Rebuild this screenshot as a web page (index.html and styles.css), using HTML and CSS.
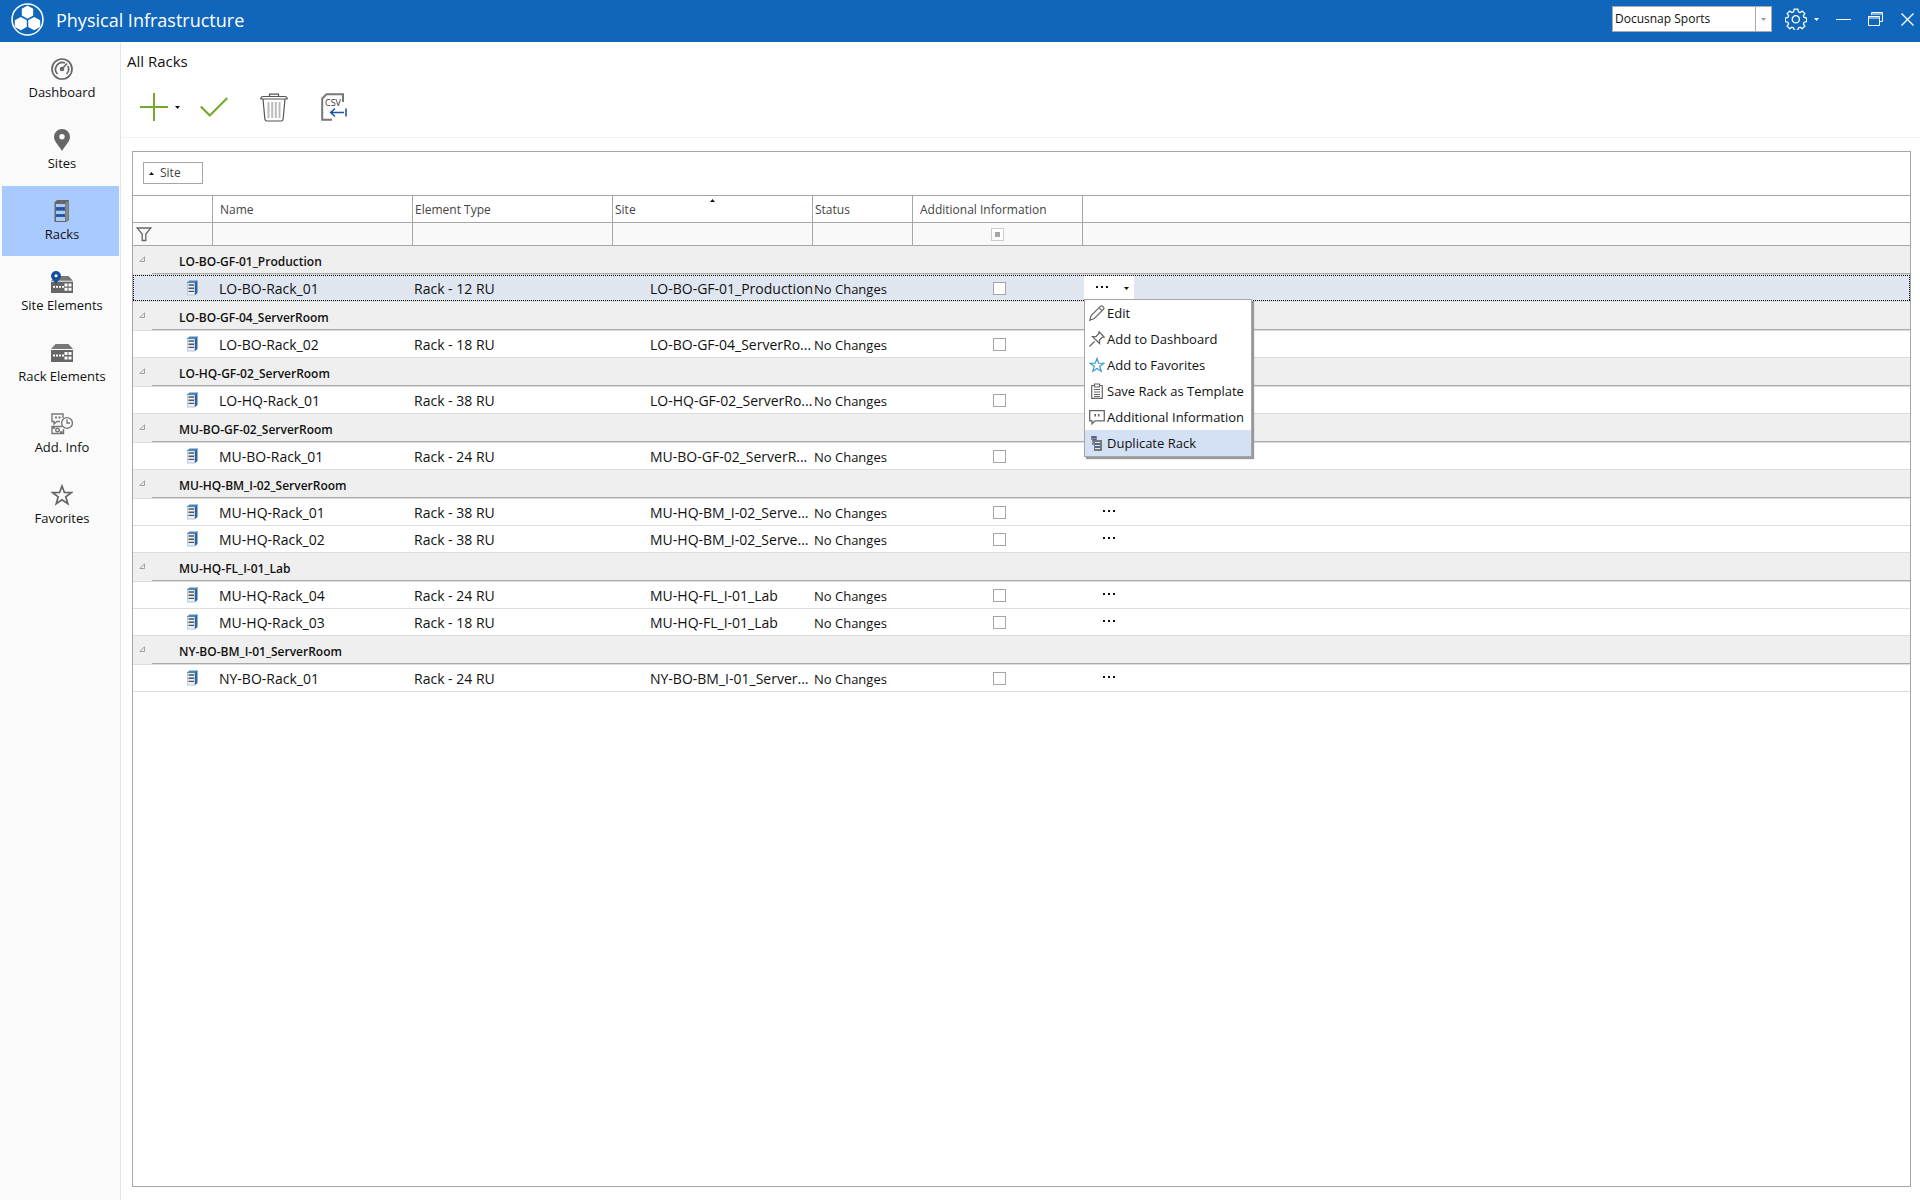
FILE: index.html
```html
<!DOCTYPE html>
<html lang="en">
<head>
<meta charset="utf-8">
<title>Physical Infrastructure</title>
<link rel="stylesheet" href="styles.css">
</head>
<body>
<svg class="defs" aria-hidden="true">
  <symbol id="rack" viewBox="0 0 11 16">
    <path d="M0 2.500 2.500 .5H11L8 3H0z" fill="#4d85bd"/>
    <path d="M7.500 3L10.500.5v12.500l-3 2.500z" fill="#2c659c"/>
    <path d="M0 3h7.500v12.500H0z" fill="#e8eff6"/>
    <path d="M1.500 5h5.500M1.500 8.200h5.500M1.500 11.400h5.500" stroke="#50555c" stroke-width="1.400"/>
    <path d="M.5 3v12h7" fill="none" stroke="#b4cadf"/>
  </symbol>
  <symbol id="dots" viewBox="0 0 12 2">
    <path d="M0 0h2v2H0zM5 0h2v2H5zM10 0h2v2h-2z" fill="#111"/>
  </symbol>
  <symbol id="down" viewBox="0 0 5 3">
    <path d="M0 0h5L2.500 3z" fill="currentColor"/>
  </symbol>
  <symbol id="up" viewBox="0 0 5 3">
    <path d="M0 3h5L2.500 0z" fill="currentColor"/>
  </symbol>
  <symbol id="fold" viewBox="0 0 6 6">
    <path d="M5.500.8v4.700H.8z" fill="none" stroke="#999" stroke-width=".9"/>
  </symbol>
  <symbol id="star" viewBox="0 0 22 22">
    <path d="M11 2l2.400 6.500 7 .1-5.600 4.200 2 6.900L11 15.700l-5.800 4 2-6.900L1.600 8.600l7-.1z" fill="none" stroke="currentColor" stroke-width="1.700"/>
  </symbol>
  <symbol id="switch" viewBox="0 0 22 18">
    <path d="M4.500 0h13L22 5H0z" fill="#777"/>
    <path d="M0 6h22v12H0z" fill="#666"/>
    <path d="M2 11.500h11" stroke="#fff" stroke-width="2" stroke-dasharray="2 1"/>
    <path d="M13.500 8h3v3h-3zM17.500 8h3v3h-3zM13.500 12.500h3v3h-3zM17.500 12.500h3v3h-3z" fill="#fff"/>
  </symbol>
</svg>

<header class="titlebar">
  <svg class="logo" viewBox="0 0 32 32" aria-hidden="true">
    <circle cx="16" cy="16" r="15" fill="none" stroke="#fff" stroke-width="1.500"/>
    <g fill="#fff">
      <path d="M16 2.500l5.500 3v6.500L16 15.200 10.500 12V5.500z"/>
      <path d="M9.500 13.500l5.800 3.200v6.600L9.500 26.500 3.700 23.300v-6.600z"/>
      <path d="M22.500 13.500l5.800 3.200v6.600l-5.800 3.200-5.800-3.200v-6.600z"/>
    </g>
  </svg>
  <h1>Physical Infrastructure</h1>
  <div class="company">
    <input type="text" value="Docusnap Sports" aria-label="Company">
    <button type="button" aria-label="Choose company"><svg width="5" height="3"><use href="#down"/></svg></button>
  </div>
  <button type="button" class="settings" aria-label="Settings">
    <svg width="22" height="22" viewBox="-11 -11 22 22" fill="none" stroke="#fff" stroke-width="1.300">
      <path d="M-1.800-9.800h3.600l.6 2.600 1.700.7 2.200-1.400 2.500 2.500-1.400 2.200.7 1.700 2.600.5v3.600l-2.600.6-.7 1.700 1.400 2.200-2.500 2.500-2.200-1.400-1.700.7-.6 2.600h-3.600l-.6-2.600-1.700-.7-2.200 1.400-2.500-2.500 1.400-2.200-.7-1.700-2.600-.6v-3.600l2.600-.5.7-1.700-1.400-2.200 2.500-2.500 2.200 1.400 1.700-.7z"/>
      <circle cx="-.2" cy=".3" r="3.600"/>
    </svg>
    <svg width="5" height="3"><use href="#down"/></svg>
  </button>
  <button type="button" class="win" aria-label="Minimize"><svg width="15" height="15"><path d="M0 7.500h15" stroke="#fff"/></svg></button>
  <button type="button" class="win" aria-label="Restore"><svg width="15" height="15" fill="none" stroke="#fff"><path d="M3.500 3V.5h11v9H12M3.500 2h11M.5 4.500h11v9H.5zM.5 6h11"/></svg></button>
  <button type="button" class="win" aria-label="Close"><svg width="15" height="15"><path d="M1.500 1.500l12 12M13.500 1.500l-12 12" stroke="#fff" stroke-width="1.400"/></svg></button>
</header>

<div class="shell">
  <nav class="sidebar">
    <a href="#dashboard">
      <svg width="22" height="22" viewBox="0 0 22 22" fill="none" stroke="#666" stroke-width="1.700">
        <circle cx="11" cy="11" r="10"/>
        <path d="M6.500 16A6.800 6.800 0 0 1 14 5M16.800 8a6.800 6.800 0 0 1-1.300 8"/>
        <path d="M11 11l5-5.500"/><circle cx="11" cy="11" r="1.500" fill="#666"/>
      </svg>Dashboard</a>
    <a href="#sites">
      <svg width="22" height="22" viewBox="0 0 22 22"><path fill="#666" fill-rule="evenodd" d="M11 0a8 8 0 0 1 8 8c0 5-5.500 9-8 14-2.500-5-8-9-8-14a8 8 0 0 1 8-8zm0 5a2.700 2.700 0 1 0 0 5.400A2.700 2.700 0 0 0 11 5z"/></svg>Sites</a>
    <a href="#racks" class="active" aria-current="page">
      <svg width="22" height="22" viewBox="0 0 22 22">
        <path d="M3.500 2.500 6 0h12v20l-3 2H3.500z" fill="#666"/>
        <path d="M14.500 3l3-2.500v19l-3 2z" fill="#8b8b8b"/>
        <path d="M5 4h9v3H5zM5 10.500h9v3.500H5zM5 17h9v4H5z" fill="#a9cafb"/>
        <path d="M5 7h9v3.500H5zM5 14h9v3H5z" fill="#2a5caa"/>
        <path d="M6 8.800h8M6 15.500h8" stroke="#123f80" stroke-dasharray="1 2"/>
      </svg>Racks</a>
    <a href="#site-elements">
      <svg width="22" height="22" viewBox="0 0 22 22">
        <svg y="5" width="22" height="17" viewBox="0 0 22 18" preserveAspectRatio="none"><use href="#switch"/></svg>
        <path d="M5 0a5 5 0 0 1 5 5c0 3-3.500 5-5 8.500C3.500 10 0 8 0 5a5 5 0 0 1 5-5z" fill="#154f9e"/>
        <circle cx="5" cy="4.800" r="1.500" fill="#fff"/>
      </svg>Site Elements</a>
    <a href="#rack-elements">
      <svg width="22" height="22" viewBox="0 0 22 22"><svg y="2" width="22" height="18"><use href="#switch"/></svg></svg>Rack Elements</a>
    <a href="#add-info">
      <svg width="22" height="22" viewBox="0 0 22 22" fill="none" stroke="#777" stroke-width="1.400">
        <path d="M12 5V1H1v7.500h2V11l3-2.500h3"/>
        <path d="M4 4.500h2M7.500 4.500h2" stroke-width="2"/>
        <circle cx="16" cy="10" r="5.400"/><path d="M16 6.500V10h3"/>
        <path d="M11 13.500H1v7h11.500V16M1 15h3M9 19h3"/><circle cx="6.500" cy="17" r="1.800"/>
      </svg>Add. Info</a>
    <a href="#favorites"><svg class="grey" width="22" height="22"><use href="#star"/></svg>Favorites</a>
  </nav>

  <main class="content">
    <h2>All Racks</h2>
    <div class="toolbar">
      <button type="button" aria-label="Add"><svg width="28" height="28"><path d="M0 14h28M14 0v28" stroke="#76a92b" stroke-width="2"/></svg></button>
      <button type="button" class="more" aria-label="More add options"><svg width="5" height="3"><use href="#down"/></svg></button>
      <button type="button" class="check" aria-label="Apply"><svg width="28" height="28"><path d="M.8 13.500l9 9L27.300 5" fill="none" stroke="#76a92b" stroke-width="2.200"/></svg></button>
      <button type="button" class="trash" aria-label="Delete">
        <svg width="28" height="29" fill="none" stroke="#555" stroke-width="1.200">
          <path d="M9.500 3.500V1.200h9v2.300M.8 6q0-2.500 2.500-2.500h21.400q2.500 0 2.500 2.500zM3 6l1.800 19.500q.2 2.500 2 2.500h14.400q1.800 0 2-2.500L25 6"/>
          <path d="M8.500 9v16M12.200 9v16M15.800 9v16M19.500 9v16" stroke="#bbb" stroke-width="2"/>
        </svg></button>
      <button type="button" class="csv" aria-label="Export as CSV">
        <svg width="27" height="29">
          <path d="M22 9V1.300H5.500L1.200 5.500v21.300H11" fill="none" stroke="#777" stroke-width="2"/>
          <text x="4" y="13">CSV</text>
          <path d="M10 19.500h13M14 15.500l-4.300 4 4.300 4M25 15.500v8" fill="none" stroke="#1d55a5" stroke-width="1.600"/>
        </svg></button>
    </div>

    <section class="grid">
      <div class="grouping">
        <button type="button"><svg width="5" height="3"><use href="#up"/></svg>Site</button>
      </div>
      <table>
        <colgroup><col class="c-icon"><col class="c-text"><col class="c-text"><col class="c-text"><col class="c-status"><col class="c-info"><col></colgroup>
        <thead>
          <tr class="heads">
            <th></th><th class="wide">Name</th><th>Element Type</th>
            <th class="sorted"><svg width="5" height="3"><use href="#up"/></svg>Site</th>
            <th>Status</th><th class="wide">Additional Information</th><th></th>
          </tr>
          <tr class="filters">
            <td><svg width="16" height="15"><path d="M1.200 1h13.600L9.800 7v6.500H6.200V7z" fill="none" stroke="#666" stroke-width="1.300"/></svg></td>
            <td></td><td></td><td></td><td></td>
            <td class="tick"><input type="checkbox" class="mixed" aria-label="Filter additional information"></td><td></td>
          </tr>
        </thead>
        <tbody id="rows"></tbody>
      </table>
    </section>
  </main>
</div>
<script src="grid.js"></script>
</body>
</html>
```
FILE: styles.css
```css
* { box-sizing: border-box; }
body {
  margin: 0;
  min-height: 100vh;
  display: flex;
  flex-direction: column;
  background: #fff;
  color: #111;
  font: 13px/18px "Open Sans", "Noto Sans", sans-serif;
}
button {
  display: flex;
  align-items: center;
  justify-content: center;
  margin: 0;
  padding: 0;
  border: 0;
  background: none;
  color: inherit;
  font: inherit;
}
h1, h2 { margin: 0; font-weight: 400; }
svg { display: block; flex: none; }
.defs { position: absolute; width: 0; height: 0; }

.titlebar {
  display: flex;
  align-items: center;
  height: 42px;
  padding: 0 0 4px 11px;
  background: #0f66bb;
  color: #fff;
}
.logo { width: 33px; height: 33px; }
h1 { flex: 1; margin-left: 12px; padding-top: 2px; font-size: 18px; line-height: 24px; }
.company {
  display: flex;
  width: 160px;
  height: 26px;
  border: 1px solid #ababab;
  background: #fff;
}
.company input {
  flex: 1;
  min-width: 0;
  border: 0;
  padding: 0 2px;
  font: 12px/18px "Open Sans", sans-serif;
  color: #111;
}
.company button { width: 16px; border-left: 1px solid #ababab; color: #999; }
.settings { gap: 7px; margin: 0 8px 0 13px; }
.win { width: 32px; height: 26px; }
.win:last-child { width: 29px; justify-content: flex-end; padding-right: 5px; }

.shell { flex: 1; display: flex; }
.sidebar {
  width: 121px;
  padding: 2px 1px 0 2px;
  display: flex;
  flex-direction: column;
  gap: 1px;
  background: #fafafa;
  border-right: 1px solid #e4e4e4;
}
.sidebar a {
  display: flex;
  flex-direction: column;
  align-items: center;
  gap: 3px;
  height: 70px;
  padding: 14px 0 0 3px;
  color: #111;
  text-decoration: none;
}
.sidebar .active { background: #a9cafe; }
.grey { color: #666; }

.content { flex: 1; min-width: 0; display: flex; flex-direction: column; }
h2 { padding: 8px 6px 0; font-size: 15px; line-height: 22px; }
.toolbar {
  display: flex;
  align-items: flex-start;
  height: 66px;
  padding: 21px 0 0 19px;
  border-bottom: 1px solid #f2f2f2;
}
.more { height: 28px; margin-left: 7px; }
.check { margin-left: 20px; }
.trash { margin-left: 32px; }
.csv { margin-left: 33px; }
.csv text { font-size: 9px; fill: #333; }

.grid {
  flex: 1;
  margin: 13px 9px 13px 11px;
  border: 1px solid #a6a6a6;
}
.grouping { height: 44px; padding: 10px; border-bottom: 1px solid #a6a6a6; }
.grouping button {
  justify-content: flex-start;
  gap: 6px;
  width: 60px;
  height: 22px;
  padding-left: 5px;
  border: 1px solid #a6a6a6;
  font-size: 12px;
  color: #444;
}
.grouping svg { color: #111; }

table { width: 100%; table-layout: fixed; border-collapse: separate; border-spacing: 0; }
.c-icon { width: 80px; }
.c-text { width: 200px; }
.c-status { width: 100px; }
.c-info { width: 170px; }
th, td { padding: 0; white-space: nowrap; text-align: left; }
.heads th, .filters td { border-right: 1px solid #a6a6a6; border-bottom: 1px solid #a6a6a6; }
.heads th:last-child, .filters td:last-child { border-right: 0; }
.heads th { position: relative; height: 27px; padding: 2px 0 0 2px; font-size: 12px; font-weight: 400; color: #444; }
.heads .wide { padding-left: 7px; }
.sorted svg { position: absolute; top: 3px; left: 97px; color: #111; }
.filters td { height: 23px; padding-left: 3px; background: #f9f9f9; }
.tick input {
  appearance: none;
  display: block;
  width: 13px;
  height: 13px;
  margin: 0 auto;
  border: 1px solid #a6a6a6;
  background: #fff;
}
.filters .tick { padding-left: 0; }
.filters .mixed { border-color: #ccc; background: #a6a6a6; box-shadow: inset 0 0 0 3px #fff; }

.group td { height: 29px; border-bottom: 1px solid #ddd; background: #efefef; }
.fold { display: flex; height: 28px; }
.fold button { justify-content: flex-start; width: 19px; height: 26px; padding-left: 6px; }
.fold span {
  flex: 1;
  padding: 7px 0 0 27px;
  border-bottom: 1px solid #aaa;
  font-size: 12px;
  font-weight: 600;
}
.row td { height: 27px; padding-top: 2px; border-bottom: 1px solid #ddd; font-size: 14px; }
.row .icon { padding: 0 0 0 54px; }
.row .name { padding-left: 6px; }
.row .type { padding-left: 1px; }
.row .site { padding-left: 37px; }
.row .status { padding-left: 1px; font-size: 13px; }
.row .tick { padding: 0 0 0 3px; }
.row .open { padding: 0 0 0 20px; }
.row .open button { height: 20px; align-items: flex-start; padding-top: 8px; }
.selected {
  --dots: repeating-linear-gradient(90deg, #000 0 1px, transparent 1px 2px);
  --side: repeating-linear-gradient(#000 0 1px, transparent 1px 2px);
}
.selected td { background: var(--dots) top / 100% 1px no-repeat, var(--dots) bottom / 100% 1px no-repeat, #dfe6f0; background-clip: padding-box; }
.selected td:first-child { background: var(--dots) top / 100% 1px no-repeat, var(--dots) bottom / 100% 1px no-repeat, var(--side) left / 1px 100% no-repeat, #dfe6f0; background-clip: padding-box; }
.selected td:last-child { background: var(--dots) top / 100% 1px no-repeat, var(--dots) bottom / 100% 1px no-repeat, var(--side) right / 1px 100% no-repeat, #dfe6f0; background-clip: padding-box; }
.row .actions { padding: 0 0 0 1px; }
.drop { position: relative; display: flex; width: 50px; height: 24px; background: #fff; }
.drop > button { width: 35px; padding-bottom: 3px; }
.drop > .arrow { width: 15px; padding-bottom: 0; }
.menu {
  position: absolute;
  top: 23px;
  left: 0;
  z-index: 1;
  width: 168px;
  margin: 0;
  padding: 0;
  list-style: none;
  border: 1px solid #a6a6a6;
  background: #fff;
  box-shadow: 2px 2px 1px #999;
  font-size: 13px;
}
.menu button { justify-content: flex-start; gap: 2px; width: 100%; height: 26px; padding-left: 4px; }
.menu .hot { background: #d4e0f4; }
.blue { color: #3a9cc8; }
```
FILE: grid.js
```js
const data = [
  ["LO-BO-GF-01_Production", [["LO-BO-Rack_01", 12, "LO-BO-GF-01_Production", "menu"]]],
  ["LO-BO-GF-04_ServerRoom", [["LO-BO-Rack_02", 18, "LO-BO-GF-04_ServerRo..."]]],
  ["LO-HQ-GF-02_ServerRoom", [["LO-HQ-Rack_01", 38, "LO-HQ-GF-02_ServerRo..."]]],
  ["MU-BO-GF-02_ServerRoom", [["MU-BO-Rack_01", 24, "MU-BO-GF-02_ServerR..."]]],
  ["MU-HQ-BM_I-02_ServerRoom", [
    ["MU-HQ-Rack_01", 38, "MU-HQ-BM_I-02_Serve..."],
    ["MU-HQ-Rack_02", 38, "MU-HQ-BM_I-02_Serve..."]]],
  ["MU-HQ-FL_I-01_Lab", [
    ["MU-HQ-Rack_04", 24, "MU-HQ-FL_I-01_Lab"],
    ["MU-HQ-Rack_03", 18, "MU-HQ-FL_I-01_Lab"]]],
  ["NY-BO-BM_I-01_ServerRoom", [["NY-BO-Rack_01", 24, "NY-BO-BM_I-01_Server..."]]]
];

const stroke = 'width="16" height="16" viewBox="0 0 16 16" fill="none" stroke="#666"';
const menu = [
  ["Edit", `<svg ${stroke} stroke-width="1.2"><path d="M.8 15.200l1.400-4.700L11.500 1.200q1.300-.8 2.500.4t.8 2.400L5.300 13.500zM10.200 2.800l3 3"/></svg>`],
  ["Add to Dashboard", `<svg ${stroke} stroke-width="1.3"><path d="M.5 15.500l5-5M10 .8L15.200 6l-2 .3-2.700 2.700v3.500L3.500 5.600 7 5.500l2.700-2.700z"/></svg>`],
  ["Add to Favorites", `<svg class="blue" width="16" height="16"><use href="#star"/></svg>`],
  ["Save Rack as Template", `<svg ${stroke} stroke-width="1.2"><path d="M5.500 2.500H2.700v12.800h10.600V2.500h-2.800M5.500 1h5v3h-5z"/><path d="M5 6.500h6M5 9h6M5 11.500h6M5 13.500h6" stroke-width="1"/></svg>`],
  ["Additional Information", `<svg ${stroke} stroke-width="1.3"><path d="M.7 1.700h14.600v10.100H6l-3 3v-3H.7z"/><path d="M6.200 5V7.500M9.700 5V7.500" stroke-width="1.600"/></svg>`],
  ["Duplicate Rack", `<svg width="16" height="16" viewBox="0 0 16 16"><path d="M2 1h6v9H3V5H2z" fill="#888"/><path d="M3 2h4M4 5h3" stroke="#2f5fa5" stroke-width="1.500"/><path d="M5 5h8v11H5z" fill="#777"/><path d="M6 7.500h5M6 10.500h5M6 13.500h5" stroke="#dde6f5" stroke-width="1.200"/><path d="M6 9h5M6 12h5" stroke="#2f5fa5"/></svg>`]
];

const dots = '<svg width="12" height="2"><use href="#dots"/></svg>';
const menuHtml = `<div class="drop">
  <button type="button" aria-label="Actions">${dots}</button>
  <button type="button" class="arrow" aria-label="Open actions"><svg width="5" height="3"><use href="#down"/></svg></button>
  <ul class="menu">${menu.map(([t, i]) =>
    `<li><button type="button"${t === "Duplicate Rack" ? ' class="hot"' : ""}>${i}${t}</button></li>`).join("")}</ul></div>`;

document.getElementById("rows").innerHTML = data.map(([title, rows]) =>
  `<tr class="group"><td colspan="7"><div class="fold">
    <button type="button" aria-label="Collapse ${title}"><svg width="6" height="6"><use href="#fold"/></svg></button>
    <span>${title}</span></div></td></tr>` +
  rows.map(([name, ru, site, open]) => `<tr class="row${open ? " selected" : ""}">
    <td class="icon"><svg width="11" height="16"><use href="#rack"/></svg></td>
    <td class="name">${name}</td><td class="type">Rack - ${ru} RU</td><td class="site">${site}</td>
    <td class="status">No Changes</td>
    <td class="tick"><input type="checkbox" aria-label="Additional information for ${name}"></td>
    <td class="${open ? "actions" : "open"}">${open ? menuHtml
      : `<button type="button" aria-label="Actions for ${name}">${dots}</button>`}</td></tr>`).join("")
).join("");
```
